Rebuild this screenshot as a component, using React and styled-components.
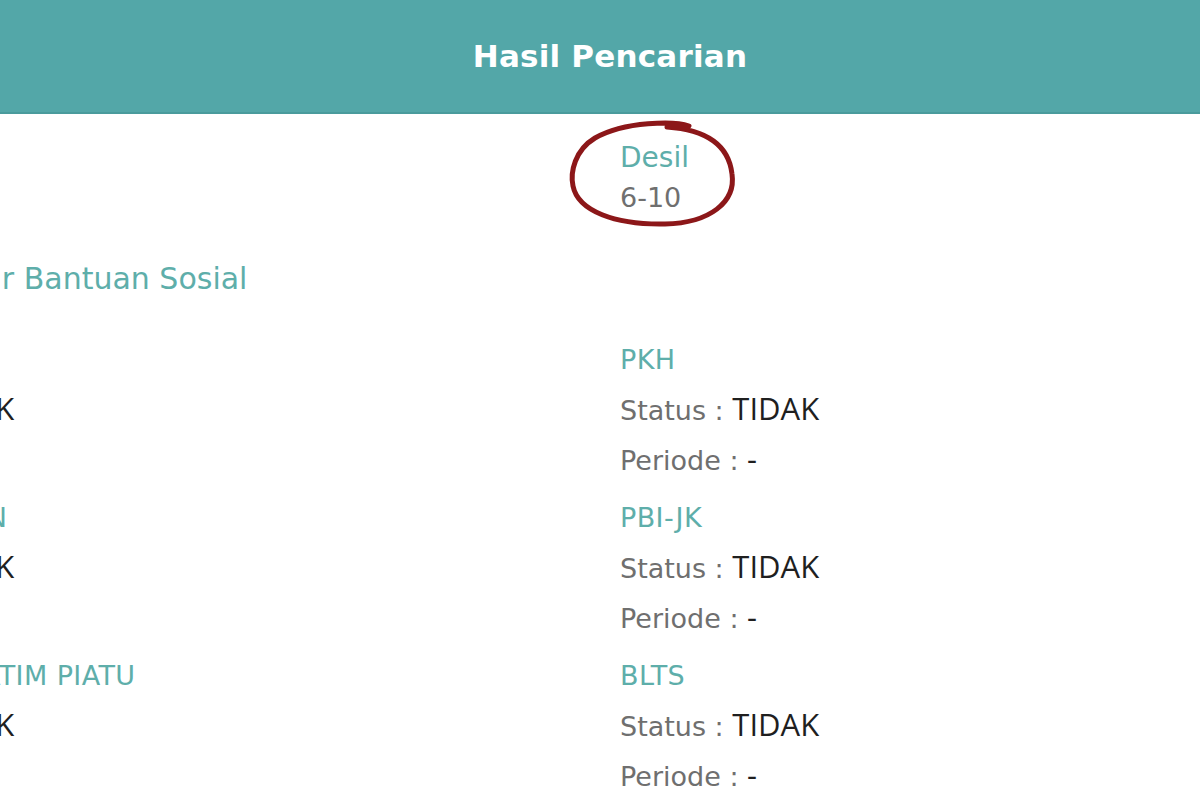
import styled, { createGlobalStyle } from "styled-components"

const GlobalStyle = createGlobalStyle`
    html, body {
        margin: 0;
        padding: 0;
        background: #ffffff;
        overflow: hidden;
    }
    body {
        font-family: "DejaVu Sans", "Noto Sans", sans-serif;
    }
`
const Header = styled.header`
    height: 112px;
    background-color: #53a7a8;
    border-bottom: 2px solid #4a9b9c;
    display: flex;
    align-items: center;
    justify-content: center;
    padding-left: 20px;
`
const HeaderTitle = styled.h1`
    margin: 0;
    color: #ffffff;
    font-size: 31px;
    line-height: 36px;
    font-weight: 700;
    letter-spacing: 0.2px;
`
const Content = styled.main`
    margin-left: -185px;
    padding-top: 27px;
    display: grid;
    grid-template-columns: 805px 1fr;
`
const InfoBlock = styled.div`
    position: relative;
`
const InfoLabel = styled.div`
    color: #5eaeaa;
    font-size: 28px;
    line-height: 34px;
`
const InfoValue = styled.div`
    color: #6f6f6f;
    font-size: 27px;
    line-height: 34px;
    margin-top: 6px;
`
const Ring = styled.svg`
    position: absolute;
    left: -55px;
    top: -23px;
    width: 175px;
    height: 112px;
    overflow: visible;
    pointer-events: none;
`
const SectionTitle = styled.h2`
    grid-column: 1 / -1;
    margin: 46px 0 46px;
    color: #5eaeaa;
    font-size: 30px;
    line-height: 36px;
    font-weight: 400;
    white-space: nowrap;
`
const Program = styled.div`
    margin-bottom: 15px;
    white-space: nowrap;
`
const ProgramName = styled.div`
    color: #5eaeaa;
    font-size: 27px;
    line-height: 34px;
    margin-bottom: 9px;
    letter-spacing: 0.4px;
`
const Row = styled.div`
    color: #6f6f6f;
    font-size: 27px;
    line-height: 50px;
`
const Value = styled.span`
    color: #1f1f1f;
    font-family: "Open Sans", "Noto Sans", sans-serif;
    font-size: 31px;
    line-height: 1;
`

const programs = [
    ["BPNT", "PKH"],
    ["PERMAKANAN", "PBI-JK"],
    ["ASISTENSI YATIM PIATU", "BLTS"],
]

const ProgramItem = ({ name }) => (
    <Program>
        <ProgramName>{name}</ProgramName>
        <Row>Status : <Value>TIDAK</Value></Row>
        <Row>Periode : <Value>-</Value></Row>
    </Program>
)

const App = () => {
    return (
        <>
            <GlobalStyle />
            <Header>
                <HeaderTitle>Hasil Pencarian</HeaderTitle>
            </Header>
            <Content>
                <InfoBlock>
                    <InfoLabel>Nama</InfoLabel>
                    <InfoValue>S***</InfoValue>
                </InfoBlock>
                <InfoBlock>
                    <InfoLabel>Desil</InfoLabel>
                    <InfoValue>6-10</InfoValue>
                    <Ring viewBox="0 0 175 112">
                        <path
                            d="M124 8 C 110 3, 60 3, 30 20 C 10 32, 5 54, 8 68 C 13 93, 50 107, 100 106 C 145 105, 171 84, 167 56 C 164 30, 145 12, 102 9"
                            fill="none"
                            stroke="#8c1719"
                            strokeWidth="5"
                            strokeLinecap="round"
                        />
                    </Ring>
                </InfoBlock>
                <SectionTitle>Status Daftar Bantuan Sosial</SectionTitle>
                {programs.map(([left, right]) => (
                    <>
                        <ProgramItem key={left} name={left} />
                        <ProgramItem key={right} name={right} />
                    </>
                ))}
            </Content>
        </>
    )
}

export default App
